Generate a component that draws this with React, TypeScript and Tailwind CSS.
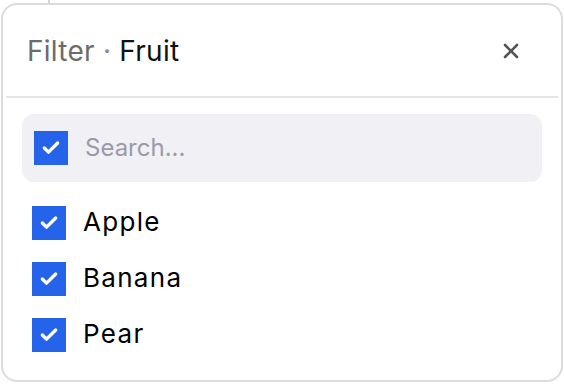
import { X, Check } from "lucide-react";

const fruits = ["Apple", "Banana", "Pear"];

function Box() {
    return (
        <span className="flex h-[34px] w-[34px] shrink-0 items-center justify-center bg-[#2563eb] text-white">
            <Check size={20} strokeWidth={4} />
        </span>
    );
}

export default function App() {
    return (
        <div className="h-[384px] w-[564px] bg-white" style={{ fontFamily: "Inter, 'Noto Sans', sans-serif" }}>
            {/* something peeking out behind the card */}
            <div className="h-[3px]">
                <div className="ml-[48px] h-[3px] w-[2px] bg-[#d6d6d6]" />
            </div>
            <div className="ml-[1px] flex h-[379px] w-[562px] flex-col rounded-[16px] border-2 border-[#dcdcdc] bg-white">
                <div className="flex h-[91px] shrink-0 items-center justify-between pl-[24px] pr-[38px] pt-[1px]">
                    <div className="text-[28px] leading-none tracking-[0.01em]">
                        <span className="text-[#6b6b6b]">Filter</span>
                        <span className="mx-[8px] text-[#8a8a8a]">·</span>
                        <span className="text-[#111]">Fruit</span>
                    </div>
                    <X size={24} strokeWidth={2.6} className="text-[#555]" />
                </div>
                <div className="mx-[3px] h-[2px] bg-[#e6e6e6]" />
                <div className="flex flex-col px-[19px] pt-[16px]">
                    <div className="flex h-[68px] items-center gap-[17px] rounded-[12px] bg-[#f0f0f5] pl-[12px]">
                        <Box />
                        <span className="text-[24px] text-[#9a9aaa]">Search...</span>
                    </div>
                    <div className="mt-[13px] flex flex-col">
                        {fruits.map((f) => (
                            <div key={f} className="flex h-[56px] items-center gap-[17px] pl-[10px]">
                                <Box />
                                <span className="-mt-[3px] text-[26px] tracking-[0.05em] text-black">{f}</span>
                            </div>
                        ))}
                    </div>
                </div>
            </div>
        </div>
    );
}
